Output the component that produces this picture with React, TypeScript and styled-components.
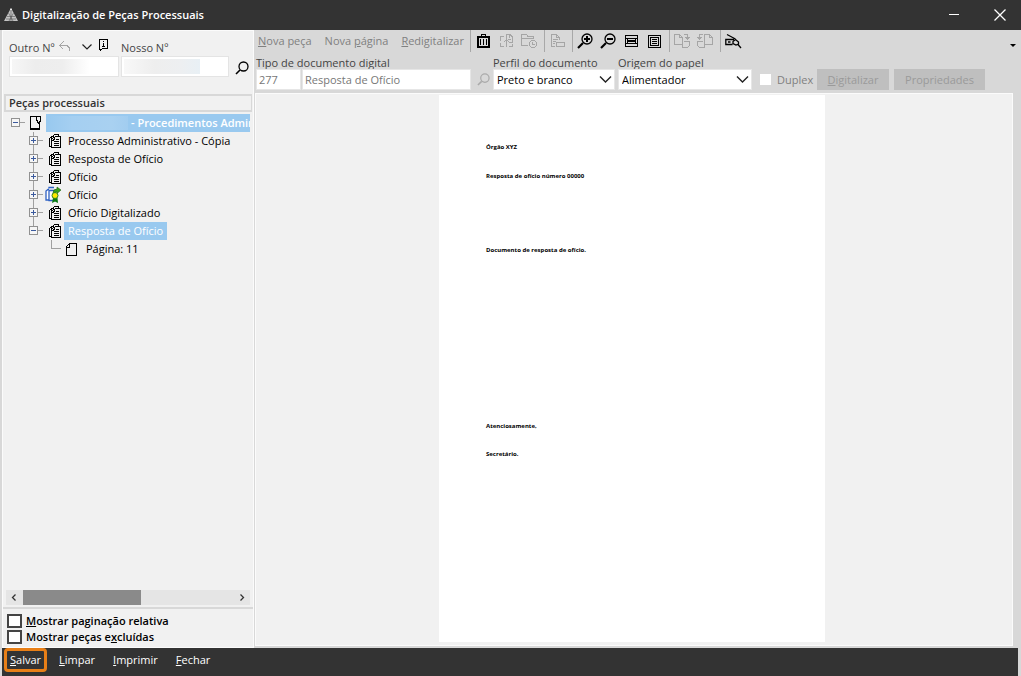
import React from "react";
import styled, { createGlobalStyle } from "styled-components";

const Global = createGlobalStyle`
  *, *::before, *::after { box-sizing: border-box; }
  html, body { margin: 0; padding: 0; }
  body, button, input, select {
    font-family: "Open Sans", "Noto Sans", sans-serif;
    font-size: 11px;
    line-height: 14px;
    color: #000;
  }
  button { border: 0; padding: 0; background: none; }
  svg { display: block; flex: none; }
`;

const Window = styled.div`
  min-height: 100vh;
  display: flex;
  flex-direction: column;
  background: #d8d8d8;
`;

const TitleBar = styled.header`
  display: flex;
  align-items: center;
  height: 30px;
  padding: 0 13px 0 4px;
  background: #333;
`;

const Title = styled.h1`
  flex: 1;
  margin: 0 0 0 4px;
  font-size: 11px;
  line-height: 14px;
  font-weight: 600;
  color: #fff;
`;

const WindowButton = styled.button`
  width: 16px;
  height: 16px;
  margin-left: 30px;
`;

const Body = styled.main`
  flex: 1;
  display: flex;
  padding: 0 8px 0 2px;
`;

const Sidebar = styled.aside`
  display: flex;
  flex-direction: column;
  width: 252px;
  flex: none;
  border: 1px solid #fbfbfb;
  background: #f1f1f1;
`;

const Search = styled.form`
  display: flex;
  align-items: flex-end;
  height: 46px;
  padding-left: 6px;
`;

const SearchField = styled.div<{ $width: number }>`
  width: ${(p) => p.$width}px;
  margin-right: 2px;
`;

const LabelLine = styled.div`
  display: flex;
  align-items: flex-end;
  height: 18px;
  margin-bottom: 1px;
`;

const Label = styled.label`
  color: #444;
  font-size: 11px;
  line-height: 14px;
  white-space: nowrap;
`;

const SmallButton = styled.button<{ $gap: number }>`
  margin: 0 0 4px ${(p) => p.$gap}px;
`;

const MaskedInput = styled.input<{ $mask: string }>`
  display: block;
  width: 100%;
  height: 21px;
  border: 1px solid #e4e4e4;
  background: ${(p) => p.$mask} 2px 2px / 72% 15px no-repeat #fff;
`;

const LensButton = styled.button`
  margin: 0 0 2px 4px;
`;

const PanelHeading = styled.h2`
  margin: 17px 1px 0 1px;
  padding: 0 3px;
  border: 2px solid #d8d8d8;
  border-right-width: 1px;
  font-size: 11px;
  line-height: 14px;
  font-weight: 600;
  color: #333;
`;

const Tree = styled.ul`
  flex: 1;
  margin: 0 3px;
  padding: 2px 0 0;
  list-style: none;
  overflow: hidden;
`;

const TreeRow = styled.li<{ $level: number }>`
  display: flex;
  align-items: center;
  height: 18px;
  padding-left: ${(p) => 5 + p.$level * 18}px;
`;

const IconCell = styled.span`
  width: 17px;
  flex: none;
`;

const NodeLabel = styled.span<{ $selected?: boolean }>`
  padding: 0 4px;
  font-size: 11px;
  line-height: 18px;
  white-space: nowrap;
  color: ${(p) => (p.$selected ? "#fff" : "#000")};
  background: ${(p) => (p.$selected ? "#99c9ef" : "transparent")};
`;

const RootLabel = styled(NodeLabel)`
  display: flex;
  flex: 1;
  min-width: 0;
  overflow: hidden;
  padding: 0 0 0 2px;
  font-weight: 600;
`;

const Mask = styled.span`
  width: 80px;
  height: 14px;
  margin: 2px 3px 0 0;
  flex: none;
  background: linear-gradient(90deg, #99c9ef, #a5cff1 30%, #a9d1f1 80%, #a2cdf0);
`;

const ScrollBar = styled.div`
  display: flex;
  align-items: center;
  height: 15px;
  margin: 0 3px;
  background: #e5e5e5;
`;

const ScrollTrack = styled.div`
  flex: 1;
  height: 15px;
`;

const ScrollThumb = styled.div`
  width: 56%;
  height: 15px;
  background: #8a8a8a;
`;

const Options = styled.fieldset`
  margin: 2px 0 0;
  padding: 4px 0 2px 4px;
  border: 0;
  border-top: 2px solid #d8d8d8;
`;

const OptionLabel = styled.label`
  display: flex;
  align-items: center;
  gap: 4px;
  height: 16px;
  font-size: 11px;
  font-weight: 600;
`;

const CheckBox = styled.input<{ $plain?: boolean }>`
  appearance: none;
  margin: 0;
  width: ${(p) => (p.$plain ? 11 : 15)}px;
  height: ${(p) => (p.$plain ? 11 : 14)}px;
  border: ${(p) => (p.$plain ? "0" : "2px solid #444")};
  background: #fff;
`;

const Content = styled.section`
  flex: 1;
  min-width: 0;
  display: flex;
  flex-direction: column;
  padding-left: 1px;
`;

const ToolBar = styled.div`
  display: flex;
  align-items: center;
  height: 22px;
  padding-left: 3px;
`;

const TextTools = styled.div`
  display: flex;
  justify-content: space-between;
  width: 206px;
  margin-right: 3px;
`;

const TextTool = styled.button`
  color: #808080;
  font-size: 11px;
  white-space: nowrap;
`;

const ToolButton = styled.button`
  width: 23px;
  padding: 0 3px;
  color: #000;
  &:disabled { color: #a5a5a5; }
`;

const Separator = styled.span`
  width: 1px;
  height: 22px;
  margin: 0 1px 0 3px;
  background: #a8a8a8;
`;

const MenuArrow = styled.button`
  margin: 9px -4px 0 auto;
`;

const ProfileBar = styled.form`
  display: flex;
  align-items: flex-end;
  height: 38px;
  padding-left: 1px;
`;

const Field = styled.div<{ $width: number; $gap: number }>`
  width: ${(p) => p.$width}px;
  margin-right: ${(p) => p.$gap}px;
`;

const FieldLabel = styled.label`
  display: block;
  height: 13px;
  color: #444;
  font-size: 11px;
  line-height: 13px;
  white-space: nowrap;
`;

const FieldPair = styled.div`
  display: grid;
  grid-template-columns: 45px 1fr;
  gap: 1px;
`;

const TextInput = styled.input`
  min-width: 0;
  height: 21px;
  padding: 0 2px;
  border: 1px solid #e6e6e6;
  background: #fff;
  color: #777;
  font-size: 11px;
`;

const TypeLens = styled.button`
  width: 13px;
  margin: 0 3px 4px 0;
`;

const SelectBox = styled.div`
  display: grid;
  align-items: center;
  & > * { grid-area: 1 / 1; }
  & > svg { justify-self: end; margin-right: 3px; pointer-events: none; }
`;

const Select = styled.select`
  appearance: none;
  width: 100%;
  height: 21px;
  padding: 0 3px;
  border: 1px solid #e6e6e6;
  border-radius: 0;
  background: #fff;
`;

const DuplexLabel = styled.label`
  display: flex;
  align-items: center;
  gap: 6px;
  width: 57px;
  height: 21px;
  color: #808080;
  font-size: 11px;
`;

const PushButton = styled.button<{ $width: number }>`
  width: ${(p) => p.$width}px;
  height: 21px;
  margin-right: 5px;
  background: #bfbfbf;
  &:disabled { color: #9a9a9a; }
`;

const Viewer = styled.div`
  flex: 1;
  display: flex;
  justify-content: center;
  align-items: flex-start;
  margin-top: 3px;
  margin-bottom: 2px;
  padding: 1px 4px 2px 0;
  border: 1px solid #fbfbfb;
  background: #f1f1f1;
`;

const Page = styled.article`
  width: 386px;
  aspect-ratio: 386 / 547;
  padding: 48px 47px;
  background: #fff;
`;

const PageLine = styled.p<{ $after: number }>`
  margin: 0 0 ${(p) => p.$after}px;
  font-size: 6px;
  line-height: 8px;
  font-weight: 700;
  white-space: nowrap;
`;

const Footer = styled.footer`
  display: flex;
  align-items: center;
  gap: 6px;
  height: 28px;
  margin: 0 3px 0 2px;
  padding: 0 2px 4px;
  background: #333;
`;

const FooterButton = styled.button<{ $active?: boolean }>`
  height: 24px;
  padding: 0 3px;
  border: 3px solid ${(p) => (p.$active ? "#e87f17" : "transparent")};
  border-radius: 4px;
  color: #fff;
  line-height: 16px;
`;

type Shape = { d: string; w?: number; h?: number; sw?: number; color?: string; crisp?: boolean };

const Glyph = ({ d, w = 17, h = 17, sw = 1, color = "currentColor", crisp = true }: Shape) => (
  <svg width={w} height={h} viewBox={`0 0 ${w} ${h}`} fill="none" stroke={color} strokeWidth={sw}
    shapeRendering={crisp ? "crispEdges" : "auto"} aria-hidden="true">
    <path d={d} />
  </svg>
);

/* Draws a small icon from rows of "#" marks, one square per mark. */
const Bitmap = ({ rows, x = 0, y = 0, color = "currentColor" }: { rows: string[]; x?: number; y?: number; color?: string }) => {
  let d = "";
  rows.forEach((row, j) => {
    for (const m of row.matchAll(/#+/g)) d += `M${x + m.index!} ${y + j}h${m[0].length}v1h-${m[0].length}z`;
  });
  return (
    <svg width="17" height="17" viewBox="0 0 17 17" fill={color} shapeRendering="crispEdges" aria-hidden="true">
      <path d={d} />
    </svg>
  );
};

const Magnifier = ({ sign }: { sign: string }) => (
  <svg width="17" height="17" viewBox="0 0 17 17" fill="none" stroke="#000" aria-hidden="true">
    <circle cx="10" cy="6" r="5" strokeWidth="1.300" />
    <path d="M6 10L1 15" strokeWidth="2.200" />
    <path d={sign} strokeWidth="2" shapeRendering="crispEdges" />
  </svg>
);

const Lens = ({ size, color }: { size: number; color: string }) => (
  <svg width={size} height={size} viewBox="0 0 14 14" fill="none" stroke={color} aria-hidden="true">
    <circle cx="8.500" cy="5.500" r="4.500" strokeWidth="1.300" />
    <path d="M5 9L1 13" strokeWidth="1.600" />
  </svg>
);

const Chevron = () => <Glyph w={13} h={9} sw={1.4} crisp={false} color="#222" d="M1 1.500L6.500 7L12 1.500" />;

const Logo = () => (
  <svg width="14" height="16" viewBox="0 0 14 16" aria-hidden="true">
    <path d="M7 1L14 14H0Z" fill="#c4c4c4" />
    <path d="M7 3V14M4.500 6L9 14M9.500 6L5 14M3 9.500H11M2 12H12" stroke="#555" strokeWidth="0.600" />
    <path d="M7 1L8 3H6Z" fill="#fff" />
  </svg>
);

const Guide = ({ kind, last }: { kind: "root" | "open" | "closed" | "leaf"; last?: boolean }) => (
  <svg width="18" height="18" viewBox="0 0 18 18" fill="none" shapeRendering="crispEdges" aria-hidden="true">
    {kind === "leaf" && <path d="M4.500 0V8.500H14" stroke="#a0a0a0" />}
    {kind !== "leaf" && (
      <>
        <path d={kind === "root" ? "M9 8.500H14" : `M4.500 0V${last ? 9 : 18}M9 8.500H14`} stroke="#a0a0a0" />
        <rect x="0.500" y="4.500" width="8" height="8" fill="#f6f6f6" stroke="#919191" />
        <path d={kind === "closed" ? "M2 8.500H7M4.500 6V11" : "M2 8.500H7"} stroke="#3b5a9d" />
      </>
    )}
  </svg>
);

const CASE = [
  "###########.",
  "#.....#...#.",
  "#.....#...#.",
  "#.....#...#.",
  "#.....##..#.",
  "#......#.##.",
  "#......###..",
  "#.......##..",
  "#........#..",
  "#........#..",
  "#........#..",
  "#........#..",
  "##########..",
  "##########..",
];

const PAGE = [
  "...########",
  "..##......#",
  ".#.#......#",
  "#..#......#",
  "####......#",
  "#.........#",
  "#.........#",
  "#.........#",
  "#.........#",
  "#.........#",
  "#.........#",
  "#.........#",
  "###########",
];

const DOCS = [
  ".....#####..",
  "....#....#..",
  "..###.######",
  ".##.##.....#",
  "#.##.#.....#",
  "#.#.##.###.#",
  "#.###......#",
  "#.#..#####.#",
  "#.#........#",
  "#.#..#####.#",
  "#.#........#",
  "#.#..#####.#",
  "###........#",
  "..##########",
];

const TRASH = [
  "....#####....",
  "....#...#....",
  "#############",
  "#############",
  "##.........##",
  "##.#..#..#.##",
  "##.#..#..#.##",
  "##.#..#..#.##",
  "##.#..#..#.##",
  "##.#..#..#.##",
  "##.#..#..#.##",
  "##.........##",
  "#############",
  "#############",
];

const FIT_WIDTH = [
  "#############",
  "#...........#",
  "#...........#",
  "#############",
  "#.#.......#.#",
  "#.#########.#",
  "#.#########.#",
  "#.#.......#.#",
  "#############",
  "#...........#",
  "#...........#",
  "#############",
];

const FIT_PAGE = [
  "#############",
  "#...........#",
  "#.#########.#",
  "#.#.......#.#",
  "#.#.#####.#.#",
  "#.#.......#.#",
  "#.#.#####.#.#",
  "#.#.......#.#",
  "#.#.#####.#.#",
  "#.#.......#.#",
  "#.#########.#",
  "#...........#",
  "#############",
];

const SignedIcon = () => (
  <svg width="17" height="18" viewBox="2 0 17 18" fill="none" overflow="visible" aria-hidden="true">
    <path d="M3.500 14H1V5L3 3.500H4M4 2.500V1.500H9M4 4.500H10V14.500H4Z" fill="#fff" stroke="#2f62c4" strokeWidth="1.300" />
    <path d="M8 12L7 17L10 15.500L13 17L12.500 12Z" fill="#0a7a12" />
    <path d="M8 7Q8 3 12 3V1L16 4L12 7.500V6Q10 6 8 7Z" fill="#37a31c" stroke="#1e5f12" strokeWidth="0.600" />
    <circle cx="10" cy="9.500" r="3" fill="#ffe900" stroke="#2a8420" />
  </svg>
);

const REPLACE = "M8.500 6V1.500H12L14.500 4V9.500H11M11.500 2V4.500M10 6.500H13M6 3.500H2.500V8M2.500 10V13.500H6M14.500 11V13.500H11M8.500 7V14M5.500 9.500L8.500 6.500L11.500 9.500";
const SCHEDULE = "M0.500 12.500V1.500H5.500L7 3.500H12.500V6M0 5.500H13M0 12.500H7M10.500 7.500H13.500L15.500 9.500V12.500L13.500 14.500H10.500L8.500 12.500V9.500L10.500 7.500M11.500 9V11.500H14";
const EXTRACT = "M2.500 13.500V1.500H7.500L10.500 4.500V7M2 13.500H6M7.500 1V4.500H11M4 6.500H9M4 8.500H7M4 10.500H6M7.500 9.500H15.500V13.500H7.500Z";
const ROTATE_R = "M0.500 1.500H5.500L8.500 4.500V11.500H0.500ZM5.500 2V4.500H8M10 1.500H13.500V6M11.500 4L13.500 6L15.500 4M10 8.500H15.500V12.500L13.500 14.500H8.500V12";
const ROTATE_L = "M7.500 1.500H12.500L15.500 4.500V11.500H7.500ZM12.500 2V4.500H15M6 1.500H2.500V6M0.500 4L2.500 6L4.500 4M6 8.500H0.500V12.500L2.500 14.500H7.500V12";

const rows: { label: string; open?: boolean; signed?: boolean; selected?: boolean }[] = [
  { label: "Processo Administrativo - Cópia" },
  { label: "Resposta de Ofício" },
  { label: "Ofício" },
  { label: "Ofício", signed: true },
  { label: "Ofício Digitalizado" },
  { label: "Resposta de Ofício", open: true, selected: true },
];

export default function App() {
  return (
    <Window>
      <Global />
      <TitleBar>
        <Logo />
        <Title>Digitalização de Peças Processuais</Title>
        <WindowButton aria-label="Minimizar"><Glyph w={16} h={16} color="#fff" d="M3 7.500H13" /></WindowButton>
        <WindowButton aria-label="Fechar janela">
          <Glyph w={16} h={16} color="#fff" crisp={false} sw={1.3} d="M2.500 2.500L13.500 13.500M13.500 2.500L2.500 13.500" />
        </WindowButton>
      </TitleBar>

      <Body>
        <Sidebar>
          <Search onSubmit={(e) => e.preventDefault()}>
            <SearchField $width={110}>
              <LabelLine>
                <Label htmlFor="outro">Outro Nº</Label>
                <SmallButton type="button" $gap={4} aria-label="Desfazer">
                  <Glyph w={11} h={10} color="#a5a5a5" d="M4.500 0.500L0.500 4.500L4.500 8.500M1 4.500H8L10.500 7V10" />
                </SmallButton>
                <SmallButton type="button" $gap={12} aria-label="Opções">
                  <Glyph w={10} h={8} color="#222" crisp={false} sw={1.2} d="M0.500 1.500L5 6L9.500 1.500" />
                </SmallButton>
                <SmallButton type="button" $gap={7} aria-label="Informações">
                  <Glyph w={10} h={12} color="#000" d="M0.500 0.500H8.500V9.500H3.500L1.500 11.500L0.500 9.500ZM4.500 2V3M4.500 4V8M3 7.500H6" />
                </SmallButton>
              </LabelLine>
              <MaskedInput id="outro" $mask="linear-gradient(90deg,#f6f6f6,#ededed 30%,#eee 65%,#fff)" />
            </SearchField>
            <SearchField $width={108}>
              <LabelLine><Label htmlFor="nosso">Nosso Nº</Label></LabelLine>
              <MaskedInput id="nosso" $mask="linear-gradient(90deg,#f8f8f8,#eee 40%,#edeff1 75%,#e8f0f5)" />
            </SearchField>
            <LensButton aria-label="Pesquisar"><Lens size={14} color="#000" /></LensButton>
          </Search>

          <PanelHeading>Peças processuais</PanelHeading>
          <Tree>
            <TreeRow $level={0}>
              <Guide kind="root" />
              <IconCell><Bitmap rows={CASE} x={1} y={1} /></IconCell>
              <RootLabel $selected><Mask />- Procedimentos Administrativos</RootLabel>
            </TreeRow>
            {rows.map((r, i) => (
              <TreeRow key={i} $level={1}>
                <Guide kind={r.open ? "open" : "closed"} last={i === rows.length - 1} />
                <IconCell>{r.signed ? <SignedIcon /> : <Bitmap rows={DOCS} x={2} y={1} />}</IconCell>
                <NodeLabel $selected={r.selected}>{r.label}</NodeLabel>
              </TreeRow>
            ))}
            <TreeRow $level={2}>
              <Guide kind="leaf" />
              <IconCell><Bitmap rows={PAGE} x={1} y={2} /></IconCell>
              <NodeLabel>Página: 11</NodeLabel>
            </TreeRow>
          </Tree>
          <ScrollBar>
            <Glyph w={17} h={15} crisp={false} sw={1.3} color="#333" d="M9.500 4.500L6.500 7.500L9.500 10.500" />
            <ScrollTrack><ScrollThumb /></ScrollTrack>
            <Glyph w={17} h={15} crisp={false} sw={1.3} color="#333" d="M7.500 4.500L10.500 7.500L7.500 10.500" />
          </ScrollBar>
          <Options>
            <OptionLabel><CheckBox type="checkbox" /><span><u>M</u>ostrar paginação relativa</span></OptionLabel>
            <OptionLabel><CheckBox type="checkbox" /><span>Mostrar peças e<u>x</u>cluídas</span></OptionLabel>
          </Options>
        </Sidebar>

        <Content>
          <ToolBar>
            <TextTools>
              <TextTool disabled><u>N</u>ova peça</TextTool>
              <TextTool disabled>Nova <u>p</u>ágina</TextTool>
              <TextTool disabled><u>R</u>edigitalizar</TextTool>
            </TextTools>
            <Separator />
            <ToolButton aria-label="Excluir"><Bitmap rows={TRASH} x={2} y={1} /></ToolButton>
            <ToolButton disabled aria-label="Substituir"><Glyph d={REPLACE} /></ToolButton>
            <ToolButton disabled aria-label="Agendar"><Glyph d={SCHEDULE} /></ToolButton>
            <Separator />
            <ToolButton disabled aria-label="Extrair"><Glyph d={EXTRACT} /></ToolButton>
            <Separator />
            <ToolButton aria-label="Ampliar"><Magnifier sign="M7 6H13M10 3V9" /></ToolButton>
            <ToolButton aria-label="Reduzir"><Magnifier sign="M7 6H13" /></ToolButton>
            <ToolButton aria-label="Ajustar à largura"><Bitmap rows={FIT_WIDTH} x={2} y={2} /></ToolButton>
            <ToolButton aria-label="Ajustar à página"><Bitmap rows={FIT_PAGE} x={2} y={2} /></ToolButton>
            <Separator />
            <ToolButton disabled aria-label="Girar à direita"><Glyph d={ROTATE_R} /></ToolButton>
            <ToolButton disabled aria-label="Girar à esquerda"><Glyph d={ROTATE_L} /></ToolButton>
            <Separator />
            <ToolButton aria-label="Configurar scanner">
              <Glyph sw={1.3} crisp={false} d="M2 1.500L10.500 6M5 6.500H0.800V11.500H7.500M0.800 6.500H9M3 9H5.500M8 8.500L10.500 6.500L13.500 9V11L11 12L8 10.500ZM12.500 11L16 15" />
            </ToolButton>
            <MenuArrow aria-label="Mais opções">
              <svg width="7" height="4" viewBox="0 0 7 4"><path d="M0 0H6L3 3Z" fill="#000" /></svg>
            </MenuArrow>
          </ToolBar>

          <ProfileBar onSubmit={(e) => e.preventDefault()}>
            <Field $width={215} $gap={6}>
              <FieldLabel htmlFor="tipo">Tipo de documento digital</FieldLabel>
              <FieldPair>
                <TextInput id="tipo" defaultValue="277" disabled />
                <TextInput aria-label="Descrição do tipo" defaultValue="Resposta de Ofício" disabled />
              </FieldPair>
            </Field>
            <TypeLens type="button" disabled aria-label="Pesquisar tipo">
              <Lens size={13} color="#aaa" />
            </TypeLens>
            <Field $width={122} $gap={3}>
              <FieldLabel htmlFor="perfil">Perfil do documento</FieldLabel>
              <SelectBox>
                <Select id="perfil"><option>Preto e branco</option></Select>
                <Chevron />
              </SelectBox>
            </Field>
            <Field $width={134} $gap={8}>
              <FieldLabel htmlFor="origem">Origem do papel</FieldLabel>
              <SelectBox>
                <Select id="origem"><option>Alimentador</option></Select>
                <Chevron />
              </SelectBox>
            </Field>
            <DuplexLabel><CheckBox $plain type="checkbox" disabled />Duplex</DuplexLabel>
            <PushButton $width={72} disabled><u>D</u>igitalizar</PushButton>
            <PushButton $width={91} disabled>Propriedades</PushButton>
          </ProfileBar>

          <Viewer>
            <Page>
              <PageLine $after={21}>Órgão XYZ</PageLine>
              <PageLine $after={66}>Resposta de ofício número 00000</PageLine>
              <PageLine $after={168}>Documento de resposta de ofício.</PageLine>
              <PageLine $after={20}>Atenciosamente,</PageLine>
              <PageLine $after={0}>Secretário.</PageLine>
            </Page>
          </Viewer>
        </Content>
      </Body>

      <Footer>
        <FooterButton $active><u>S</u>alvar</FooterButton>
        <FooterButton><u>L</u>impar</FooterButton>
        <FooterButton><u>I</u>mprimir</FooterButton>
        <FooterButton><u>F</u>echar</FooterButton>
      </Footer>
    </Window>
  );
}
